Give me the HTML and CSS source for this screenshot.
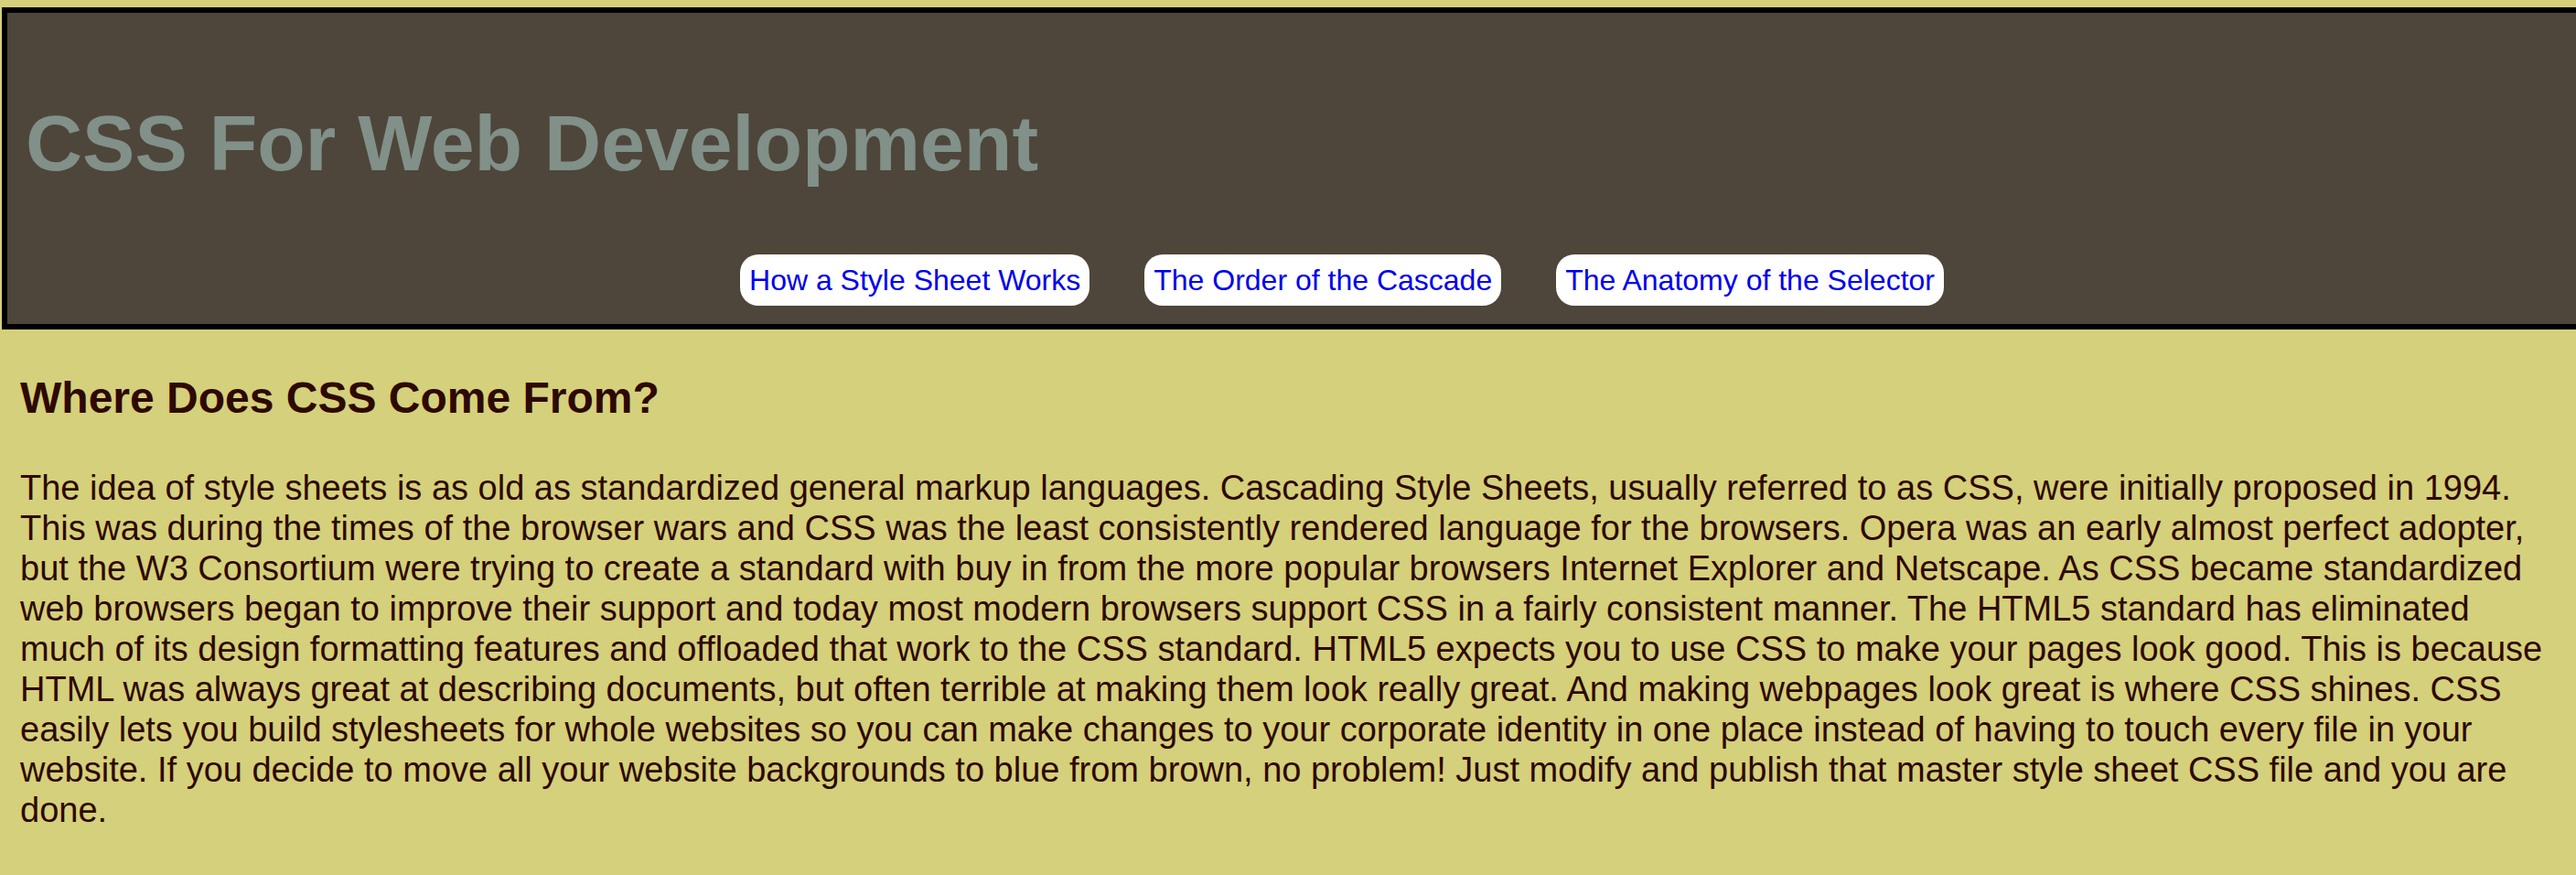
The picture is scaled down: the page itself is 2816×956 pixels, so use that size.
FILE: index.html
```html
<!DOCTYPE html>
<html lang="en">
<head>
<meta charset="utf-8">
<title>CSS For Web Development</title>
<link rel="stylesheet" href="styles.css">
</head>
<body>
<header class="site-header">
  <h1 class="site-title">CSS For Web Development</h1>
  <nav>
    <ul class="nav-list">
      <li><a class="nav-link" href="#works">How a Style Sheet Works</a></li>
      <li><a class="nav-link" href="#cascade">The Order of the Cascade</a></li>
      <li><a class="nav-link" href="#selector">The Anatomy of the Selector</a></li>
    </ul>
  </nav>
</header>
<main class="content">
  <h2 class="section-title">Where Does CSS Come From?</h2>
  <p class="section-text">The idea of style sheets is as old as standardized general markup languages. Cascading Style Sheets, usually referred to as CSS, were initially proposed in 1994. This was during the times of the browser wars and CSS was the least consistently rendered language for the browsers. Opera was an early almost perfect adopter, but the W3 Consortium were trying to create a standard with buy in from the more popular browsers Internet Explorer and Netscape. As CSS became standardized web browsers began to improve their support and today most modern browsers support CSS in a fairly consistent manner. The HTML5 standard has eliminated much of its design formatting features and offloaded that work to the CSS standard. HTML5 expects you to use CSS to make your pages look good. This is because HTML was always great at describing documents, but often terrible at making them look really great. And making webpages look great is where CSS shines. CSS easily lets you build stylesheets for whole websites so you can make changes to your corporate identity in one place instead of having to touch every file in your website. If you decide to move all your website backgrounds to blue from brown, no problem! Just modify and publish that master style sheet CSS file and you are done.</p>
</main>
</body>
</html>
```

FILE: styles.css
```css
body {
  margin: 8px 0 8px 2px;
  background: #d5d07b;
  color: #2e0902;
  font-family: Helvetica, "Liberation Sans", Arial, sans-serif;
}

.site-header {
  padding: 20px;
  border: 6px solid #000;
  border-right: 0;
  background: #4e463b;
}

.site-title {
  margin: 72px 0;
  color: #819088;
  font-size: 86px;
  line-height: 100px;
}

.nav-list {
  display: flex;
  justify-content: center;
  gap: 60px;
  margin: 0;
  padding: 0 0 0 110px;
  list-style: none;
}

.nav-link {
  display: block;
  padding: 10px;
  border-radius: 20px;
  background: #fff;
  color: #00e;
  font-size: 32px;
  line-height: 36px;
  text-decoration: none;
}

.content {
  padding: 0 20px;
}

.section-title {
  margin: 47px 0 48px;
  font-size: 48px;
  line-height: 56px;
}

.section-text {
  margin: 0;
  font-size: 38px;
  line-height: 44px;
}
```
